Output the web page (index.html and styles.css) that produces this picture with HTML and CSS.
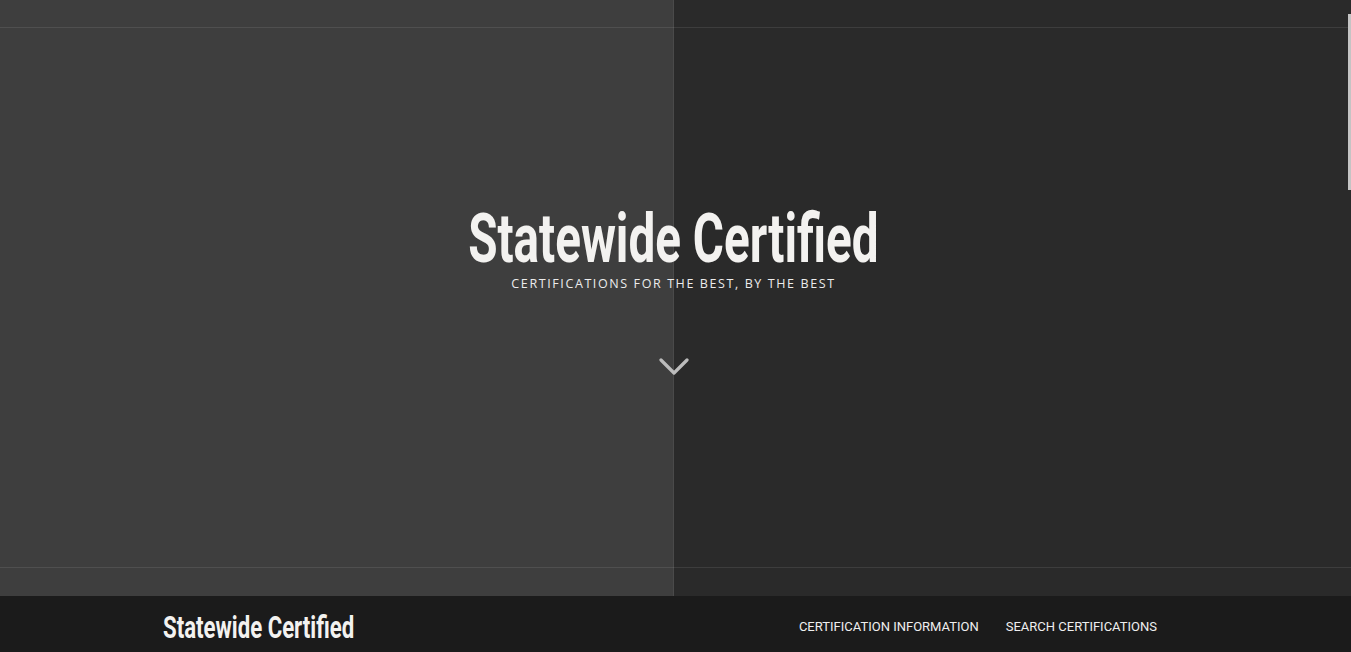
FILE: index.html
```html
<!DOCTYPE html>
<html lang="en">
<head>
<meta charset="utf-8">
<title>Statewide Certified</title>
<link rel="stylesheet" href="styles.css">
</head>
<body>
<header class="hero">
  <h1 class="hero-title">Statewide Certified</h1>
  <p class="hero-tagline">Certifications for the best, by the best</p>
  <a class="hero-down" href="#about" aria-label="Scroll down">
    <svg width="30" height="19" viewBox="0 0 30 19">
      <polyline points="2,2 15,15 28,2" fill="none" stroke="#bcbcbc" stroke-width="3.2" stroke-linecap="round" stroke-linejoin="round"/>
    </svg>
  </a>
</header>
<nav class="navbar">
  <a class="brand" href="#"><span class="brand-text">Statewide Certified</span></a>
  <ul class="nav-links">
    <li><a href="#">Certification Information</a></li>
    <li><a href="#">Search Certifications</a></li>
  </ul>
</nav>
<div class="scroll-thumb"></div>
</body>
</html>
```

FILE: styles.css
```css
html, body {
  margin: 0;
  padding: 0;
  height: 100%;
  overflow: hidden;
  background: #1b1b1b;
}

.hero {
  height: 596px;
  box-sizing: border-box;
  display: flex;
  flex-direction: column;
  align-items: center;
  padding: 204px 4px 0 0;
  background:
    linear-gradient(to bottom, transparent 27px, rgba(255,255,255,0.09) 27px, rgba(255,255,255,0.09) 28px, transparent 28px),
    linear-gradient(to bottom, transparent 567px, rgba(255,255,255,0.09) 567px, rgba(255,255,255,0.09) 568px, transparent 568px),
    linear-gradient(to right, #3e3e3e 0, #3e3e3e 673px, #4a4a4a 673px, #4a4a4a 674px, #2a2a2a 674px, #2a2a2a 100%);
}

.hero-title {
  margin: 0;
  font-family: Roboto, "Liberation Sans", sans-serif;
  font-weight: 700;
  font-size: 69px;
  line-height: 69px;
  height: 69px;
  color: #f3f2f0;
  white-space: nowrap;
  transform: scaleX(0.69);
}

.hero-tagline {
  margin: 3px 0 0;
  font-family: "Open Sans", "Liberation Sans", sans-serif;
  font-size: 12.5px;
  line-height: 16px;
  letter-spacing: 1.6px;
  text-transform: uppercase;
  color: #ececec;
}

.hero-down {
  display: block;
  margin-top: 66px;
  line-height: 0;
}

.navbar {
  display: flex;
  align-items: center;
  justify-content: space-between;
  padding: 15px 194px 15px 163px;
  background: #1b1b1b;
}

.brand {
  display: block;
  text-decoration: none;
  width: 190px;
  height: 32px;
}

.brand-text {
  display: inline-block;
  font-family: Roboto, "Liberation Sans", sans-serif;
  font-weight: 700;
  font-size: 32px;
  line-height: 32px;
  color: #f3f2f0;
  white-space: nowrap;
  transform: scaleX(0.693);
  transform-origin: left center;
}

.nav-links {
  display: flex;
  gap: 27px;
  margin: 0 0 2px;
  padding: 0;
  list-style: none;
}

.nav-links a {
  font-family: Roboto, "Liberation Sans", sans-serif;
  font-size: 13px;
  line-height: 16px;
  letter-spacing: 0;
  text-transform: uppercase;
  text-decoration: none;
  color: #efefef;
}

.scroll-thumb {
  position: fixed;
  right: 0;
  top: 14px;
  width: 3px;
  height: 176px;
  background: #c4c4c4;
}
```
